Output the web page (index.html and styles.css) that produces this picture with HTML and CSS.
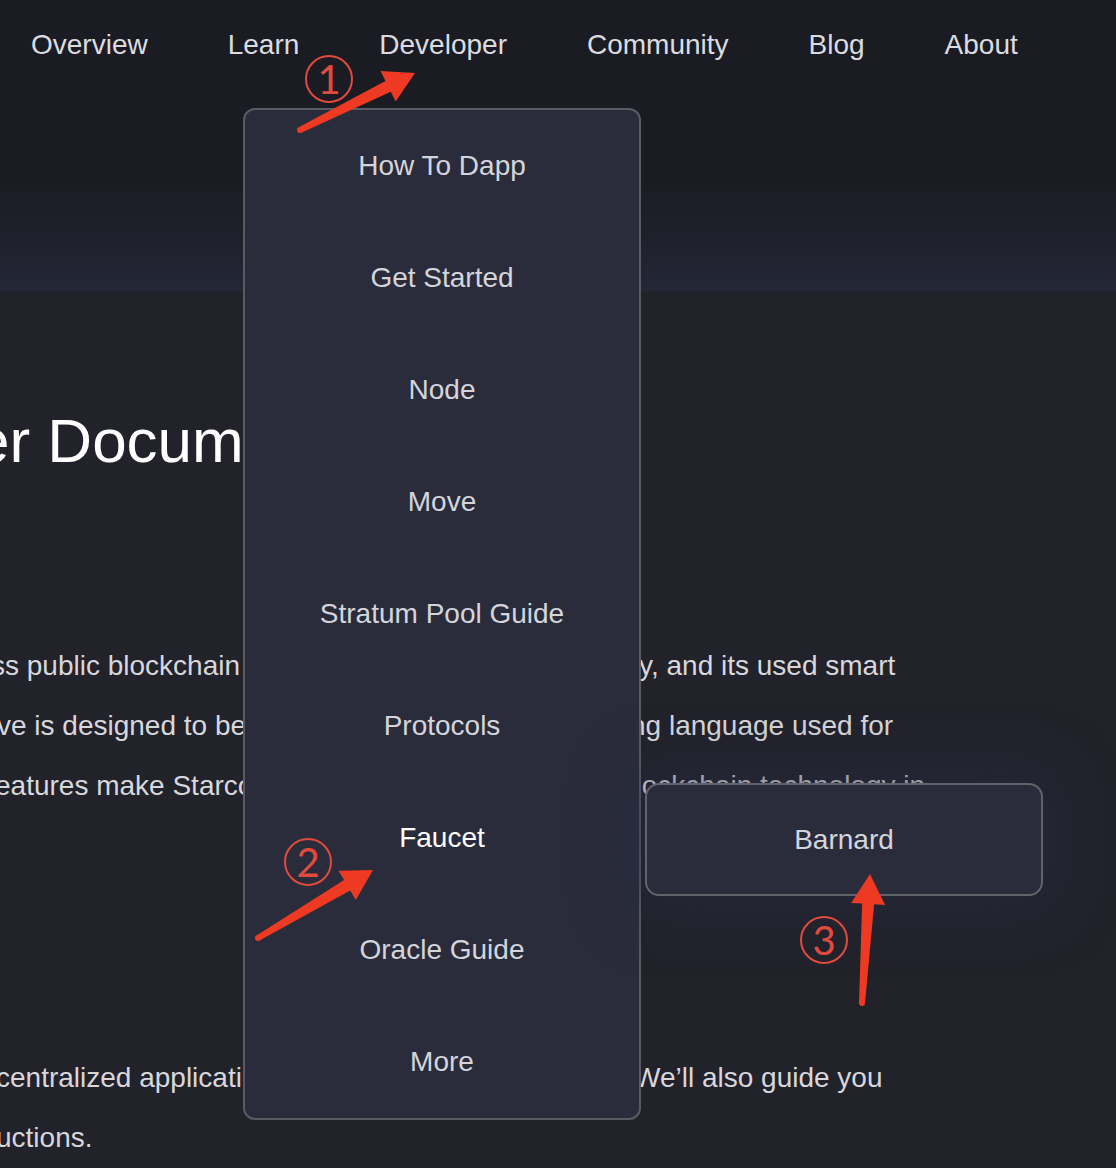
FILE: index.html
```html
<!DOCTYPE html>
<html lang="en">
<head>
<meta charset="utf-8">
<title>Developer Documentation</title>
<link rel="stylesheet" href="styles.css">
</head>
<body>
<div class="page">
  <header class="site-header">
    <nav class="nav">
      <a class="nav-item">Overview</a>
      <a class="nav-item">Learn</a>
      <a class="nav-item">Developer</a>
      <a class="nav-item">Community</a>
      <a class="nav-item">Blog</a>
      <a class="nav-item">About</a>
    </nav>
  </header>

  <main class="content">
    <h1 class="title">er Documentation</h1>
    <div class="para para-1">
      <div class="line"><span class="seg-l l1">ss public blockchain that</span><span class="seg-r r1">y, and its used smart</span></div>
      <div class="line"><span class="seg-l l2">ve is designed to be</span><span class="seg-r r2">ng language used for</span></div>
      <div class="line"><span class="seg-l l3">eatures make Starcoin</span><span class="seg-r r3">blockchain technology in</span></div>
    </div>
    <div class="para para-2">
      <div class="line"><span class="seg-l l4">centralized application</span><span class="seg-r r4">We’ll also guide you</span></div>
      <div class="line"><span class="seg-l l5">uctions.</span></div>
    </div>
  </main>

  <ul class="dropdown">
    <li class="dd-item">How To Dapp</li>
    <li class="dd-item">Get Started</li>
    <li class="dd-item">Node</li>
    <li class="dd-item">Move</li>
    <li class="dd-item">Stratum Pool Guide</li>
    <li class="dd-item">Protocols</li>
    <li class="dd-item dd-active">Faucet</li>
    <li class="dd-item">Oracle Guide</li>
    <li class="dd-item">More</li>
  </ul>

  <div class="submenu">
    <div class="sub-item">Barnard</div>
  </div>

  <svg class="annot" width="1116" height="1168" viewBox="0 0 1116 1168" aria-hidden="true">
    <g fill="#ee3a22">
      <polygon points="301.33,132.69 390.78,91.70 395.67,101.55 415,73 380.57,71.09 385.46,80.94 298.67,127.31"/>
      <circle cx="300" cy="130" r="3"/>
      <polygon points="259.53,940.58 350.22,890.44 355.82,899.91 373,870 338.52,870.63 344.12,880.10 256.47,935.42"/>
      <circle cx="258" cy="938" r="3"/>
      <polygon points="864.99,1003.19 874.13,904.31 885.11,904.99 870,874 851.17,902.89 862.15,903.57 859.01,1002.81"/>
      <circle cx="862" cy="1003" r="3"/>
    </g>
  </svg>

  <span class="badge badge-1">1</span>
  <span class="badge badge-2">2</span>
  <span class="badge badge-3">3</span>
</div>
</body>
</html>
```

FILE: styles.css
```css
* {
  box-sizing: border-box;
}

html, body {
  margin: 0;
  padding: 0;
}

body {
  background: #22222b;
  font-family: "Liberation Sans", Arial, sans-serif;
  color: #d6d6db;
  overflow: hidden;
}

.page {
  position: relative;
  width: 1116px;
  height: 1168px;
  overflow: hidden;
}

/* Header / nav */
.site-header {
  height: 291px;
  background: linear-gradient(180deg, #1b1c23 0%, #1b1c23 62%, #1f202b 82%, #242738 100%);
}

.nav {
  display: flex;
  gap: 80px;
  padding: 28px 0 0 31px;
}

.nav-item {
  font-size: 28px;
  line-height: 1.2;
  color: #dcdce0;
  text-decoration: none;
}

/* Main content */
.content {
  display: flex;
  flex-direction: column;
}

.title {
  margin: 119px 0 0 0;
  font-size: 62px;
  line-height: 1;
  font-weight: normal;
  color: #ffffff;
  white-space: nowrap;
  text-indent: -25px;
}

.para {
  display: flex;
  flex-direction: column;
  font-size: 28px;
}

.para-1 {
  margin-top: 164px;
}

.para-2 {
  margin-top: 232px;
}

.line {
  display: grid;
  grid-template-columns: 620px auto;
  height: 60px;
  line-height: 60px;
  white-space: nowrap;
}

.seg-l {
  color: #d7d7dc;
}

.seg-r {
  color: #d7d7dc;
}

.l1 { margin-left: -9px; }
.l2 { margin-left: -3px; }
.l3 { margin-left: -5px; }
.l4 { margin-left: -4px; }
.l5 { margin-left: -4px; }

.r1 { padding-left: 19px; }
.r2 { padding-left: 10px; }
.r3 { padding-left: 0; }
.r4 { padding-left: 14px; }

/* Dropdown menu */
.dropdown {
  position: absolute;
  left: 243px;
  top: 108px;
  width: 398px;
  margin: 0;
  padding: 0;
  list-style: none;
  background: #2a2c3b;
  border: 2px solid #5a5b62;
  border-radius: 12px;
  z-index: 2;
}

.dd-item {
  height: 112px;
  line-height: 112px;
  text-align: center;
  font-size: 28px;
  color: #d4d5db;
}

.dd-active {
  color: #ffffff;
}

/* Submenu */
.submenu {
  position: absolute;
  left: 645px;
  top: 783px;
  width: 398px;
  height: 113px;
  background: #2a2c3b;
  border: 2px solid #62636a;
  border-radius: 14px;
  box-shadow: 0 0 60px 12px rgba(40, 45, 68, 0.55);
  z-index: 2;
}

.sub-item {
  height: 109px;
  line-height: 109px;
  text-align: center;
  font-size: 28px;
  color: #d4d5db;
}

/* Annotations */
.annot {
  position: absolute;
  left: 0;
  top: 0;
  z-index: 3;
  pointer-events: none;
}

.badge {
  position: absolute;
  z-index: 3;
  width: 48px;
  height: 48px;
  border: 2px solid #e24a3d;
  border-radius: 50%;
  display: flex;
  align-items: center;
  justify-content: center;
  font-family: "Lato", "Liberation Sans", sans-serif;
  font-weight: 400;
  font-size: 40px;
  line-height: 1;
  color: #e24a3d;
}

.badge-1 { left: 305px; top: 55px; }
.badge-2 { left: 284px; top: 838px; }
.badge-3 { left: 800px; top: 916px; }
```
